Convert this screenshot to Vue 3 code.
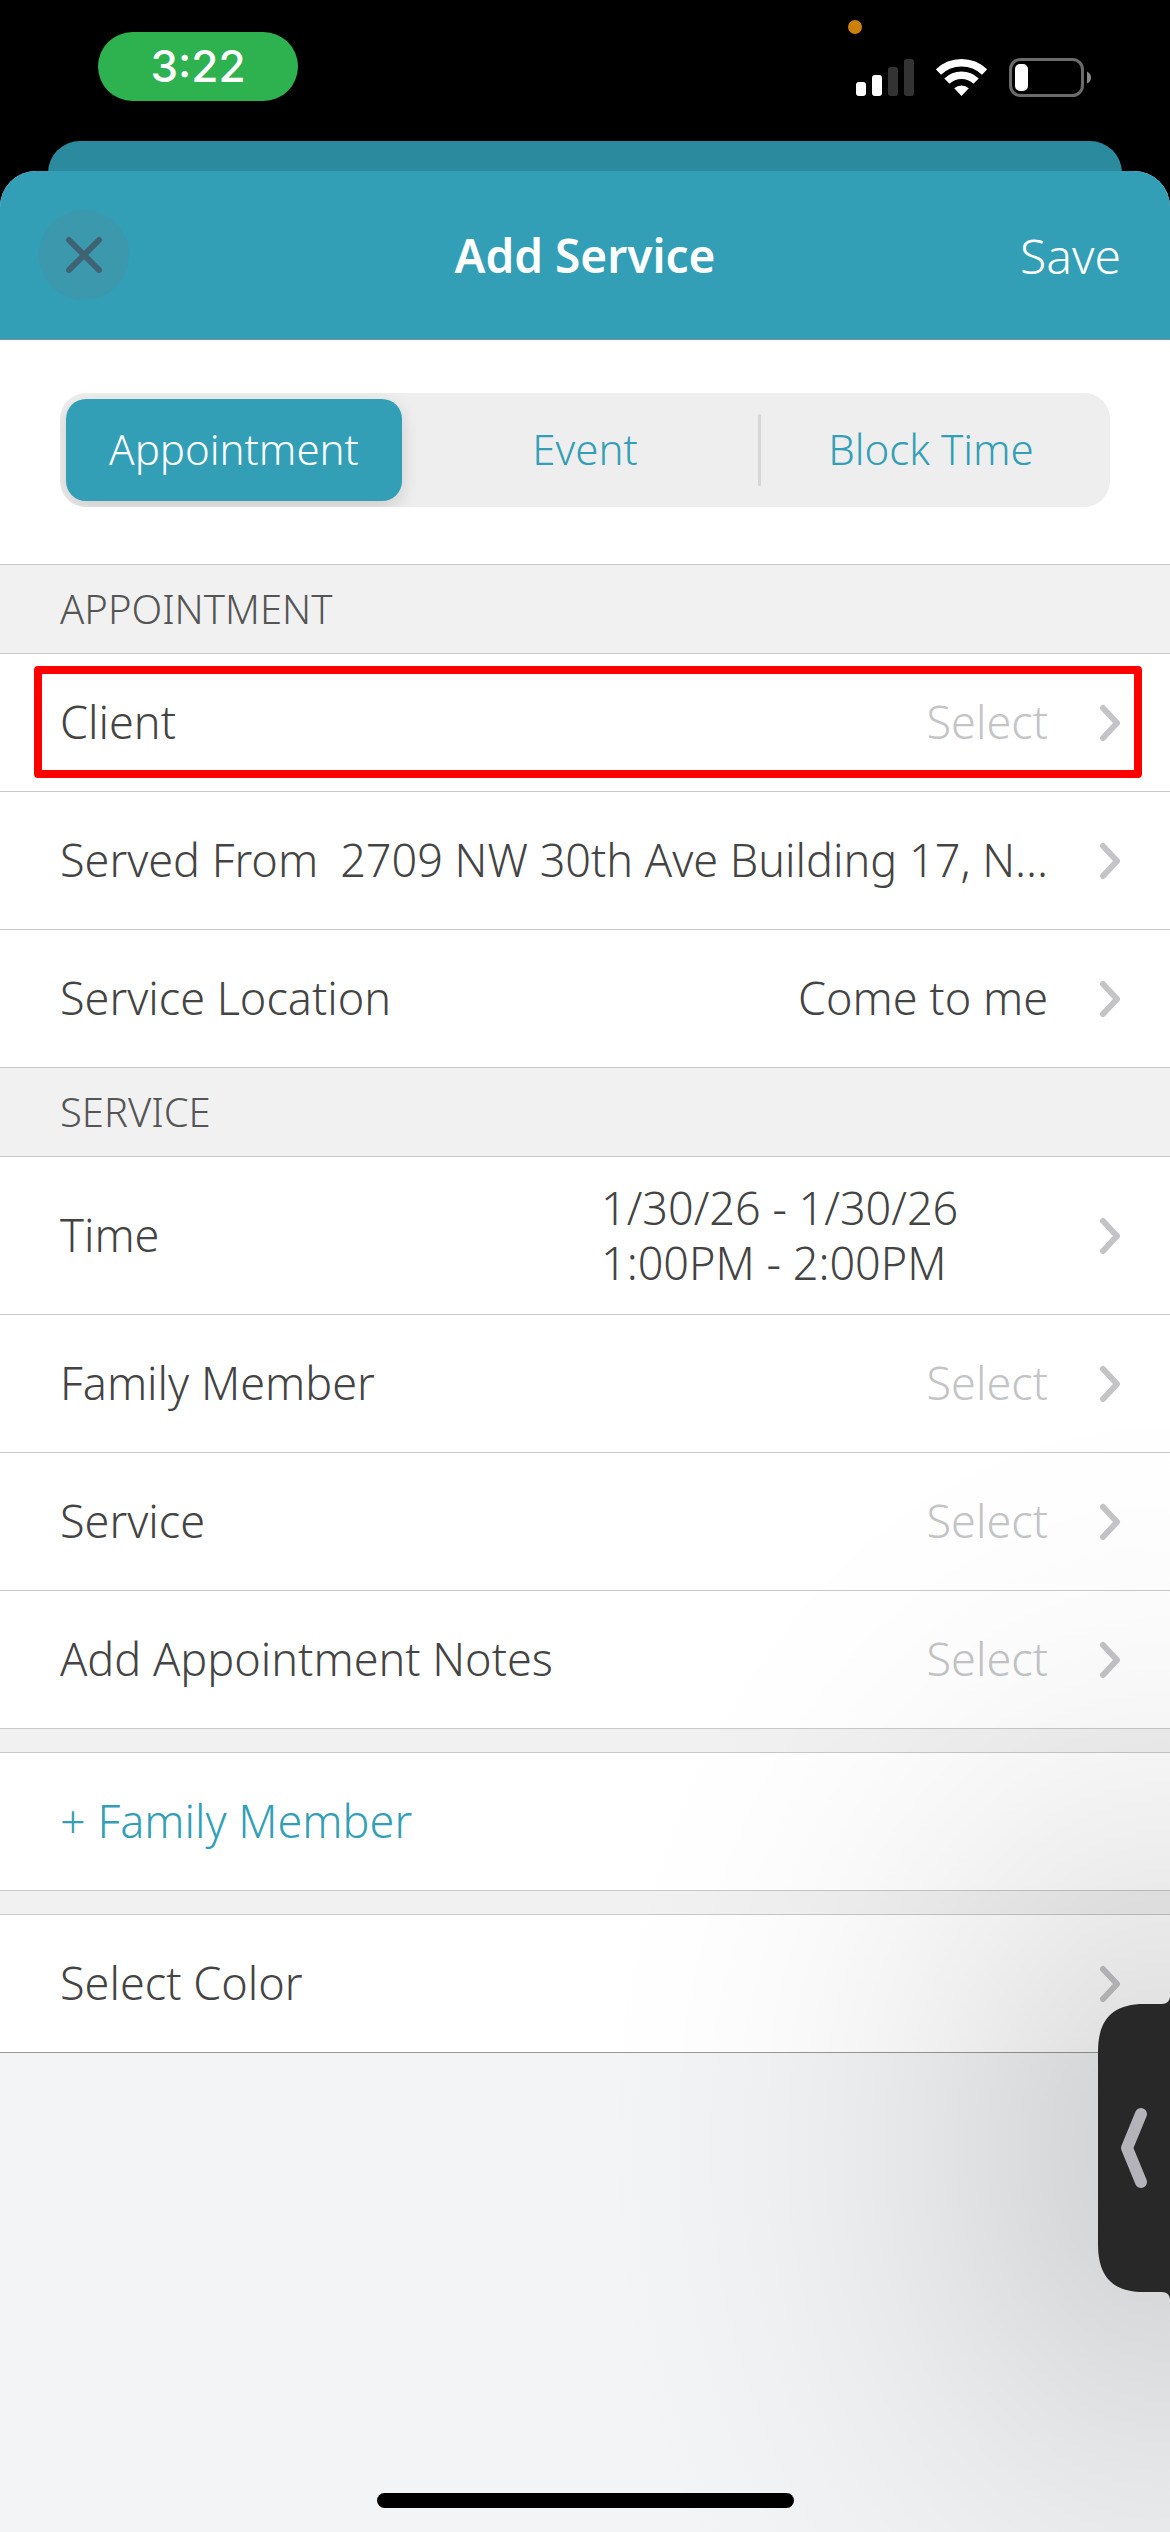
<script setup>
import { ref } from 'vue'

const tabs = ['Appointment', 'Event', 'Block Time']
const activeTab = ref('Appointment')

const groups = [
  {
    title: 'APPOINTMENT',
    rows: [
      { label: 'Client', placeholder: 'Select', highlighted: true },
      { label: 'Served From', value: '2709 NW 30th Ave Building 17, N...' },
      { label: 'Service Location', value: 'Come to me' },
    ],
  },
  {
    title: 'SERVICE',
    rows: [
      { label: 'Time', lines: ['1/30/26 - 1/30/26', '1:00PM - 2:00PM'] },
      { label: 'Family Member', placeholder: 'Select' },
      { label: 'Service', placeholder: 'Select' },
      { label: 'Add Appointment Notes', placeholder: 'Select' },
    ],
  },
]
</script>

<template>
  <div class="screen">
    <div class="status">
      <span class="clock">3:22</span>
      <i class="mic-dot"></i>
      <div class="indicators">
        <svg width="58" height="39" viewBox="0 0 58 39" aria-hidden="true">
          <rect x="0" y="24" width="10" height="14" rx="3" fill="#fff" />
          <rect x="16" y="17" width="10" height="21" rx="3" fill="#fff" />
          <rect x="32" y="9" width="10" height="29" rx="3" fill="#333" />
          <rect x="48" y="1" width="10" height="37" rx="3" fill="#333" />
        </svg>
        <svg width="51" height="39" viewBox="0 0 51 39" aria-hidden="true">
          <g fill="none" stroke="#fff" stroke-width="7.5">
            <path d="M2.4 14.1A33.25 33.25 0 0 1 48.6 14.1" />
            <path d="M10.9 23.2A20.75 20.75 0 0 1 40.1 23.2" />
          </g>
          <path d="M25.5 38L18.2 30.2A11 11 0 0 1 32.8 30.2Z" fill="#fff" />
        </svg>
        <svg width="82" height="39" viewBox="0 0 82 39" aria-hidden="true">
          <rect x="1.5" y="1.5" width="72" height="36" rx="10" fill="none" stroke="#6b6b6b" stroke-width="3" />
          <rect x="6" y="6" width="13" height="27" rx="5" fill="#fff" />
          <path d="M78 13.5Q82 15.5 82 19.5T78 25.5Z" fill="#8a8a8a" />
        </svg>
      </div>
    </div>

    <div class="sheet-behind"></div>

    <div class="sheet">
      <header class="navbar">
        <button class="close" type="button" aria-label="Close">
          <svg width="38" height="38" viewBox="0 0 38 38" aria-hidden="true">
            <path d="M4 4L34 34M34 4L4 34" stroke="#3f6372" stroke-width="6" stroke-linecap="round" />
          </svg>
        </button>
        <h1>Add Service</h1>
        <button class="save" type="button">Save</button>
      </header>

      <div class="tab-area">
        <div class="tabs" role="tablist">
          <button
            v-for="tab in tabs"
            :key="tab"
            type="button"
            role="tab"
            class="tab"
            :class="{ active: tab === activeTab }"
            :aria-selected="tab === activeTab"
            @click="activeTab = tab"
          >{{ tab }}</button>
        </div>
      </div>

      <main>
        <section v-for="group in groups" :key="group.title">
          <h2>{{ group.title }}</h2>
          <button
            v-for="row in group.rows"
            :key="row.label"
            type="button"
            class="row"
            :class="{ highlighted: row.highlighted, tall: row.lines }"
          >
            <span class="label">{{ row.label }}</span>
            <span v-if="row.lines" class="value lines">
              <span v-for="line in row.lines" :key="line">{{ line }}</span>
            </span>
            <span v-else class="value" :class="{ placeholder: row.placeholder }">{{ row.value || row.placeholder }}</span>
            <svg class="chevron" width="22" height="38" viewBox="0 0 22 38" aria-hidden="true">
              <path d="M4 4L18 19L4 34" />
            </svg>
          </button>
        </section>

        <div class="gap"></div>
        <button type="button" class="row add"><span class="label">+ Family Member</span></button>
        <div class="gap"></div>
        <button type="button" class="row last">
          <span class="label">Select Color</span>
          <svg class="chevron" width="22" height="38" viewBox="0 0 22 38" aria-hidden="true">
            <path d="M4 4L18 19L4 34" />
          </svg>
        </button>
      </main>

      <div class="home"><i></i></div>
    </div>

    <div class="drawer-shadow"></div>
    <button class="drawer" type="button" aria-label="Open side panel">
      <svg width="72" height="328" viewBox="0 0 72 328" aria-hidden="true">
        <path d="M72 13Q71 20 64 20H46C14 20 0 36 0 68V260C0 292 14 308 46 308H64Q71 308 72 315Z" fill="#282828" />
        <path d="M43 130L29 164L43 198" fill="none" stroke="#b4b3ba" stroke-width="12" stroke-linecap="round" stroke-linejoin="round" />
      </svg>
    </button>
  </div>
</template>

<style>
body {
  margin: 0;
  background: #000;
}
</style>

<style scoped>
.screen {
  position: relative;
  display: flex;
  flex-direction: column;
  min-height: 100vh;
  overflow: hidden;
  background: #000;
  color: #444;
  font-family: "Noto Sans", "Open Sans", sans-serif;
  font-size: 45px;
  font-weight: 300;
}

button {
  margin: 0;
  padding: 0;
  border: 0;
  background: none;
  color: inherit;
  font: inherit;
}

svg {
  display: block;
  flex: none;
}

.status {
  position: relative;
  display: flex;
  justify-content: space-between;
  align-items: flex-start;
  height: 141px;
  box-sizing: border-box;
  padding: 32px 79px 0 98px;
}

.clock {
  width: 200px;
  border-radius: 35px;
  background: #2eb14f;
  color: #fff;
  font-family: Inter, sans-serif;
  font-size: 44px;
  font-weight: 500;
  line-height: 69px;
  text-align: center;
}

.mic-dot {
  position: absolute;
  top: 20px;
  right: 308px;
  width: 14px;
  height: 14px;
  border-radius: 50%;
  background: #cb800b;
}

.indicators {
  display: flex;
  gap: 22px;
  padding-top: 26px;
}

.sheet-behind {
  height: 60px;
  margin: 0 48px -30px;
  border-radius: 32px 32px 0 0;
  background: #2c8a9f;
}

.sheet {
  position: relative;
  flex: 1;
  display: flex;
  flex-direction: column;
  border-radius: 36px 36px 0 0;
  background: #f3f4f6;
  overflow: hidden;
}

.navbar {
  display: grid;
  grid-template-columns: 1fr auto 1fr;
  align-items: center;
  height: 168px;
  padding: 0 39px;
  border-bottom: 1px solid #6f969f;
  background: #329fb7;
  color: #fff;
}

.close {
  display: flex;
  align-items: center;
  justify-content: center;
  width: 90px;
  height: 90px;
  border-radius: 50%;
  background: #3b98ad;
}

h1 {
  margin: 0;
  font-size: 46px;
  font-weight: 600;
}

.save {
  justify-self: end;
  margin-right: 10px;
  font-size: 48px;
}

.tab-area {
  padding: 53px 60px 57px;
  border-bottom: 1px solid #c8c8ca;
  background: #fff;
}

.tabs {
  display: grid;
  grid-template-columns: repeat(3, 1fr);
  height: 102px;
  padding: 6px;
  border-radius: 26px;
  background: #eee;
  overflow: hidden;
}

.tab {
  position: relative;
  padding-bottom: 4px;
  border-radius: 20px;
  color: #329fb7;
  font-size: 42px;
}

.tab.active {
  margin-right: 10px;
  background: #329fb7;
  box-shadow: 0 6px 18px rgba(0, 0, 0, 0.14);
  color: #fff;
}

.tab:last-child::before {
  content: "";
  position: absolute;
  top: 15px;
  bottom: 15px;
  left: 0;
  width: 3px;
  border-radius: 2px;
  background: #d6d6d6;
}

main {
  display: flex;
  flex-direction: column;
}

h2 {
  margin: 0;
  padding: 0 60px;
  border-bottom: 1px solid #c8c8ca;
  background: #f1f1f1;
  color: #555;
  font-size: 40px;
  font-weight: 300;
  line-height: 88px;
}

.row {
  position: relative;
  display: flex;
  align-items: center;
  width: 100%;
  height: 138px;
  box-sizing: border-box;
  padding: 0 49px 0 60px;
  border-bottom: 1px solid #c8c8ca;
  background: #fff;
  text-align: left;
  white-space: nowrap;
}

.row.tall {
  height: 158px;
}

.row.highlighted::after {
  content: "";
  position: absolute;
  inset: 12px 28px 13px 34px;
  border: 8px solid #f00;
  border-radius: 4px;
}

.row.last {
  border-bottom-color: #999;
}

.label,
.value {
  padding-bottom: 2px;
}

.value {
  margin-left: auto;
}

.lines {
  display: flex;
  flex-direction: column;
  width: 447px;
  line-height: 55px;
}

.placeholder {
  color: #c4c4c6;
}

.chevron {
  margin-left: 51px;
  fill: none;
  stroke: #c4c4c6;
  stroke-width: 6;
  stroke-linecap: round;
  stroke-linejoin: round;
}

.last .chevron {
  margin-left: auto;
}

.add {
  color: #329fb7;
}

.gap {
  height: 23px;
  border-bottom: 1px solid #c8c8ca;
  background: #f1f1f1;
}

.home {
  margin-top: auto;
  padding: 24px 0;
}

.home i {
  display: block;
  width: 417px;
  height: 15px;
  margin: 0 auto;
  border-radius: 8px;
  background: #000;
}

/* Soft shade that falls from the side panel's handle across the page */
.drawer-shadow {
  position: absolute;
  right: 0;
  bottom: -396px;
  width: 600px;
  height: 1560px;
  background: radial-gradient(
    600px 780px at 100% 50%,
    rgba(0, 0, 0, 0.145) 0%,
    rgba(0, 0, 0, 0.124) 12%,
    rgba(0, 0, 0, 0.11) 20%,
    rgba(0, 0, 0, 0.086) 30%,
    rgba(0, 0, 0, 0.062) 40%,
    rgba(0, 0, 0, 0.042) 50%,
    rgba(0, 0, 0, 0.026) 60%,
    rgba(0, 0, 0, 0.014) 70%,
    rgba(0, 0, 0, 0.005) 85%,
    rgba(0, 0, 0, 0) 100%
  );
  pointer-events: none;
}

.drawer {
  position: absolute;
  right: 0;
  bottom: 220px;
}
</style>
